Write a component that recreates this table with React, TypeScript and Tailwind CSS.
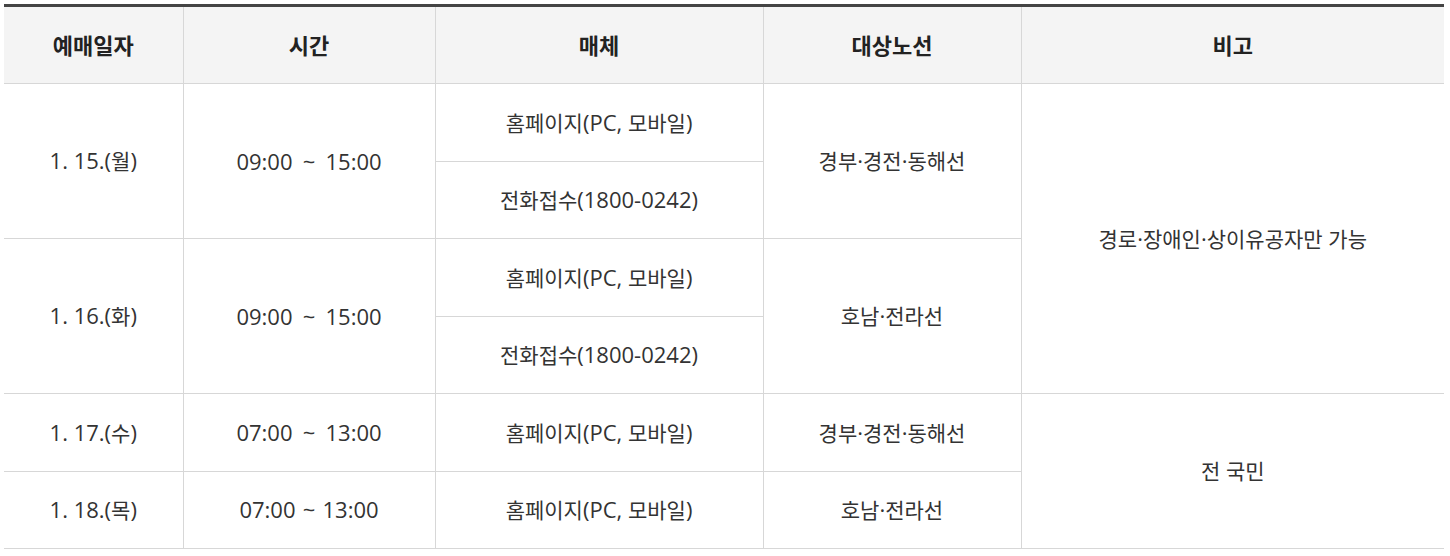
const cell = "border-b border-l border-[#d7d7d7] text-center align-middle px-2";
const first = "border-b border-[#d7d7d7] text-center align-middle px-2";
const head = "border-b border-l border-[#d7d7d7] font-bold text-[#222222] text-[22px]";

// Hangul runs get a slightly smaller size than the latin/digit runs
function K({ text }: { text: string }) {
  const parts = text.split(/([가-힣]+)/).filter((p) => p !== "");
  return (
    <>
      {parts.map((p, i) =>
        /[가-힣]/.test(p) ? (
          <span key={i} className="text-[21px]">
            {p}
          </span>
        ) : (
          <span key={i}>{p}</span>
        )
      )}
    </>
  );
}

function Time({ text, wide }: { text: string; wide?: boolean }) {
  return <span className={wide ? "[word-spacing:4.5px]" : "[word-spacing:1.5px]"}>{text}</span>;
}

export default function App() {
  return (
    <div className="w-[1450px] h-[556px] bg-white pt-1 pl-1">
      <table className="w-[1440px] table-fixed border-collapse border-t-[3px] border-t-[#444444] text-[22px] text-[#333333] [font-family:'Open_Sans','Noto_Sans_CJK_KR',sans-serif]">
        <colgroup>
          <col className="w-[179px]" />
          <col className="w-[252px]" />
          <col className="w-[328px]" />
          <col className="w-[258px]" />
          <col className="w-[423px]" />
        </colgroup>
        <thead>
          <tr className="h-[78px] bg-[#f4f4f4]">
            <th className="border-b border-[#d7d7d7] font-bold text-[#222222] text-[22px]">예매일자</th>
            <th className={head}>시간</th>
            <th className={head}>매체</th>
            <th className={head}>대상노선</th>
            <th className={head}>비고</th>
          </tr>
        </thead>
        <tbody>
          <tr className="h-[77.5px]">
            <td rowSpan={2} className={first}><K text="1. 15.(월)" /></td>
            <td rowSpan={2} className={cell}><Time text="09:00 ~ 15:00" wide /></td>
            <td className={cell}><K text="홈페이지(PC, 모바일)" /></td>
            <td rowSpan={2} className={cell}><K text="경부·경전·동해선" /></td>
            <td rowSpan={4} className={cell}><K text="경로·장애인·상이유공자만 가능" /></td>
          </tr>
          <tr className="h-[77.5px]">
            <td className={cell}><K text="전화접수(1800-0242)" /></td>
          </tr>
          <tr className="h-[77.5px]">
            <td rowSpan={2} className={first}><K text="1. 16.(화)" /></td>
            <td rowSpan={2} className={cell}><Time text="09:00 ~ 15:00" wide /></td>
            <td className={cell}><K text="홈페이지(PC, 모바일)" /></td>
            <td rowSpan={2} className={cell}><K text="호남·전라선" /></td>
          </tr>
          <tr className="h-[77.5px]">
            <td className={cell}><K text="전화접수(1800-0242)" /></td>
          </tr>
          <tr className="h-[77.5px]">
            <td className={first}><K text="1. 17.(수)" /></td>
            <td className={cell}><Time text="07:00 ~ 13:00" wide /></td>
            <td className={cell}><K text="홈페이지(PC, 모바일)" /></td>
            <td className={cell}><K text="경부·경전·동해선" /></td>
            <td rowSpan={2} className={cell}><K text="전 국민" /></td>
          </tr>
          <tr className="h-[77.5px]">
            <td className={first}><K text="1. 18.(목)" /></td>
            <td className={cell}><Time text="07:00 ~ 13:00" /></td>
            <td className={cell}><K text="홈페이지(PC, 모바일)" /></td>
            <td className={cell}><K text="호남·전라선" /></td>
          </tr>
        </tbody>
      </table>
    </div>
  );
}
